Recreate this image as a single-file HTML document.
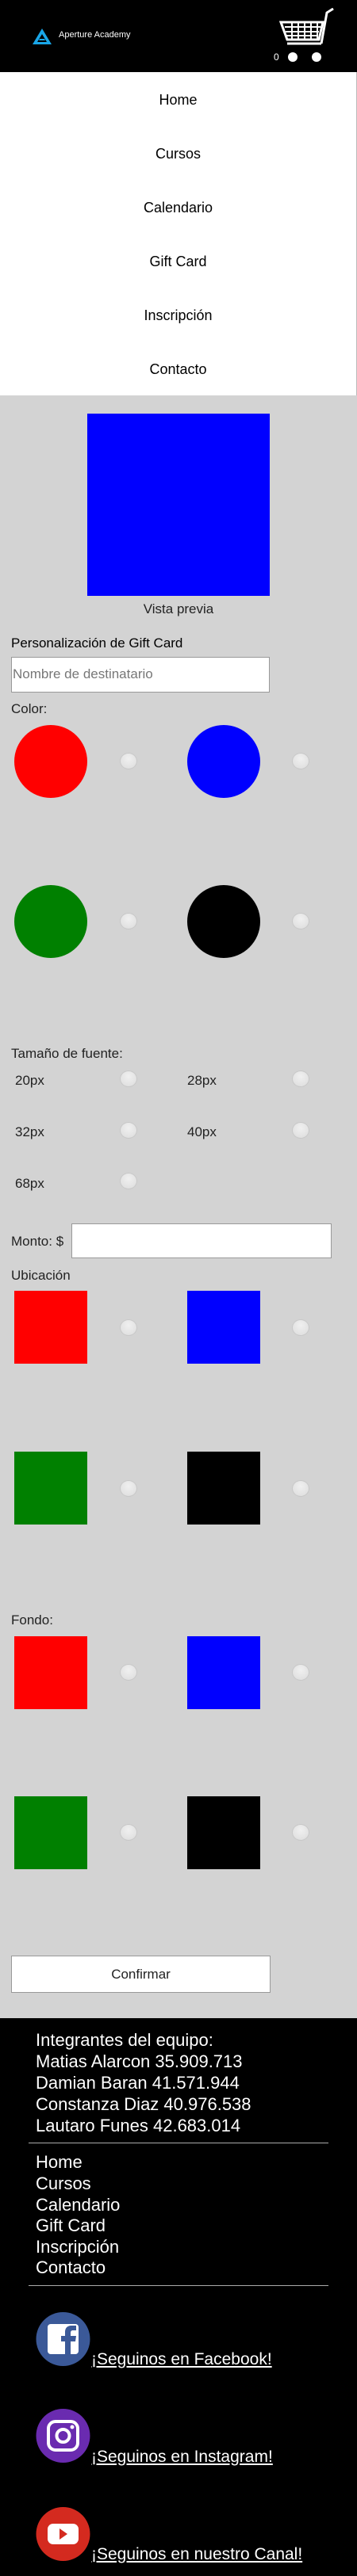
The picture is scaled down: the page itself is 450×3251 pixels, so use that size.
<!DOCTYPE html>
<html><head><meta charset="utf-8"><style>
*{margin:0;padding:0;box-sizing:border-box}
body{width:450px;height:3251px;position:relative;background:#d3d3d3;font-family:"Liberation Sans",sans-serif;overflow:hidden}
.a{position:absolute}
.nav{position:absolute;left:0;width:449px;text-align:center;font-size:18px;color:#000;line-height:24px}
.rad{position:absolute;width:22px;height:21px;border-radius:50%;background:radial-gradient(circle at 50% 35%,#f0f0f0,#dcdcdc);border:1px solid #c8c8c8}
.lbl{position:absolute;font-size:17px;color:#222;line-height:20px}
.ft{position:absolute;left:45px;color:#fff;font-size:22px;line-height:27px}
.soc{position:absolute;left:115px;color:#fff;font-size:21px;text-decoration:underline}
</style></head><body>
<div class="a" style="left:0;top:0;width:450px;height:91px;background:#000"></div>
<svg class="a" style="left:40px;top:35px" width="26" height="23" viewBox="0 0 26 23"><path d="M13 1 L25 21 L1 21 Z M13 8 L19 18 L7 18 Z" fill="#19a6e8" fill-rule="evenodd"/><path d="M10 14 L16 14 L17 16 L9 16Z" fill="#19a6e8"/></svg>
<div class="a" style="left:74px;top:38px;color:#fff;font-size:11px;">Aperture Academy</div>
<svg class="a" style="left:352px;top:10px" width="70" height="70" viewBox="0 0 70 70"><path d="M2 18 L55 18 L50 40 L10 40 Z" fill="none" stroke="#fff" stroke-width="3"/><path d="M7 24h45M8 30h42M9 35h40M16 18v22M24 18v22M32 18v22M40 18v22M48 18v22" stroke="#fff" stroke-width="2"/><path d="M53 45 L10 45 M53 45 L60 6 L68 1" fill="none" stroke="#fff" stroke-width="3"/><circle cx="17" cy="62" r="6" fill="#fff"/><circle cx="47" cy="62" r="6" fill="#fff"/></svg>
<div class="a" style="left:345px;top:65px;color:#fff;font-size:12px">0</div>
<div class="a" style="left:0;top:91px;width:449px;height:408px;background:#fff"></div>
<div class="a" style="left:449px;top:91px;width:1px;height:408px;background:#bbb"></div>
<div class="nav" style="top:114px">Home</div>
<div class="nav" style="top:182px">Cursos</div>
<div class="nav" style="top:250px">Calendario</div>
<div class="nav" style="top:318px">Gift Card</div>
<div class="nav" style="top:386px">Inscripción</div>
<div class="nav" style="top:454px">Contacto</div>

<div class="a" style="left:110px;top:522px;width:230px;height:230px;background:#00f"></div>
<div class="a" style="left:0;width:450px;top:759px;text-align:center;font-size:17px;color:#222">Vista previa</div>
<div class="a" style="left:14px;top:802px;font-size:17px;color:#000">Personalización de Gift Card</div>
<div class="a" style="left:14px;top:829px;width:326px;height:45px;background:#fff;border:1px solid #999;font-size:17px;color:#777;padding:11px 1px">Nombre de destinatario</div>
<div class="lbl" style="left:14px;top:885px">Color:</div>
<div class="a" style="left:18px;top:915px;width:92px;height:92px;border-radius:50%;background:#f00"></div>
<div class="a" style="left:236px;top:915px;width:92px;height:92px;border-radius:50%;background:#00f"></div>
<div class="a" style="left:18px;top:1117px;width:92px;height:92px;border-radius:50%;background:#008000"></div>
<div class="a" style="left:236px;top:1117px;width:92px;height:92px;border-radius:50%;background:#000"></div>
<div class="rad" style="left:151px;top:950px"></div><div class="rad" style="left:368px;top:950px"></div>
<div class="rad" style="left:151px;top:1152px"></div><div class="rad" style="left:368px;top:1152px"></div>

<div class="lbl" style="left:14px;top:1320px">Tamaño de fuente:</div>
<div class="lbl" style="left:19px;top:1354px">20px</div><div class="rad" style="left:151px;top:1351px"></div>
<div class="lbl" style="left:236px;top:1354px">28px</div><div class="rad" style="left:368px;top:1351px"></div>
<div class="lbl" style="left:19px;top:1419px">32px</div><div class="rad" style="left:151px;top:1416px"></div>
<div class="lbl" style="left:236px;top:1419px">40px</div><div class="rad" style="left:368px;top:1416px"></div>
<div class="lbl" style="left:19px;top:1484px">68px</div><div class="rad" style="left:151px;top:1480px"></div>

<div class="lbl" style="left:14px;top:1557px">Monto: $</div>
<div class="a" style="left:90px;top:1544px;width:328px;height:44px;background:#fff;border:1px solid #999"></div>
<div class="lbl" style="left:14px;top:1600px">Ubicación</div>
<div class="a" style="left:18px;top:1629px;width:92px;height:92px;background:#f00"></div>
<div class="a" style="left:236px;top:1629px;width:92px;height:92px;background:#00f"></div>
<div class="a" style="left:18px;top:1832px;width:92px;height:92px;background:#008000"></div>
<div class="a" style="left:236px;top:1832px;width:92px;height:92px;background:#000"></div>
<div class="rad" style="left:151px;top:1665px"></div><div class="rad" style="left:368px;top:1665px"></div>
<div class="rad" style="left:151px;top:1868px"></div><div class="rad" style="left:368px;top:1868px"></div>

<div class="lbl" style="left:14px;top:2035px">Fondo:</div>
<div class="a" style="left:18px;top:2065px;width:92px;height:92px;background:#f00"></div>
<div class="a" style="left:236px;top:2065px;width:92px;height:92px;background:#00f"></div>
<div class="a" style="left:18px;top:2267px;width:92px;height:92px;background:#008000"></div>
<div class="a" style="left:236px;top:2267px;width:92px;height:92px;background:#000"></div>
<div class="rad" style="left:151px;top:2100px"></div><div class="rad" style="left:368px;top:2100px"></div>
<div class="rad" style="left:151px;top:2302px"></div><div class="rad" style="left:368px;top:2302px"></div>

<div class="a" style="left:14px;top:2468px;width:327px;height:47px;background:#fff;border:1px solid #999;text-align:center;font-size:17px;line-height:45px;color:#222">Confirmar</div>

<div class="a" style="left:0;top:2547px;width:450px;height:704px;background:#000"></div>
<div class="ft" style="top:2561px">Integrantes del equipo:</div>
<div class="ft" style="top:2588px">Matias Alarcon 35.909.713</div>
<div class="ft" style="top:2615px">Damian Baran 41.571.944</div>
<div class="ft" style="top:2642px">Constanza Diaz 40.976.538</div>
<div class="ft" style="top:2669px">Lautaro Funes 42.683.014</div>
<div class="a" style="left:36px;top:2704px;width:378px;height:1px;background:#aaa"></div>
<div class="ft" style="top:2715px">Home</div>
<div class="ft" style="top:2742px">Cursos</div>
<div class="ft" style="top:2769px">Calendario</div>
<div class="ft" style="top:2795px">Gift Card</div>
<div class="ft" style="top:2822px">Inscripción</div>
<div class="ft" style="top:2848px">Contacto</div>
<div class="a" style="left:36px;top:2884px;width:378px;height:1px;background:#aaa"></div>

<svg class="a" style="left:45px;top:2918px" width="69" height="68" viewBox="0 0 69 68"><circle cx="34.5" cy="34" r="34" fill="#3b5998"/><rect x="15" y="15" width="39" height="38" rx="4" fill="#fff"/><path d="M44 53V37h6l1-7h-7v-4c0-2 1-3 3-3h4v-6h-6c-6 0-8 4-8 8v5h-5v7h5v16z" fill="#3b5998"/></svg>
<div class="soc" style="top:2966px">¡Seguinos en Facebook!</div>
<svg class="a" style="left:45px;top:3040px" width="69" height="68" viewBox="0 0 69 68"><circle cx="34.5" cy="34" r="34" fill="#6a2bb0"/><rect x="16" y="16" width="37" height="36" rx="9" fill="none" stroke="#fff" stroke-width="4"/><circle cx="34.5" cy="34" r="8" fill="none" stroke="#fff" stroke-width="4"/><circle cx="46" cy="23" r="2.5" fill="#fff"/></svg>
<div class="soc" style="top:3089px">¡Seguinos en Instagram!</div>
<svg class="a" style="left:45px;top:3164px" width="69" height="68" viewBox="0 0 69 68"><circle cx="34.5" cy="34" r="34" fill="#d42a1f"/><rect x="15" y="21" width="39" height="26" rx="7" fill="#fff"/><path d="M30 27l10 7-10 7z" fill="#d42a1f"/></svg>
<div class="soc" style="top:3212px">¡Seguinos en nuestro Canal!</div>
</body></html>
